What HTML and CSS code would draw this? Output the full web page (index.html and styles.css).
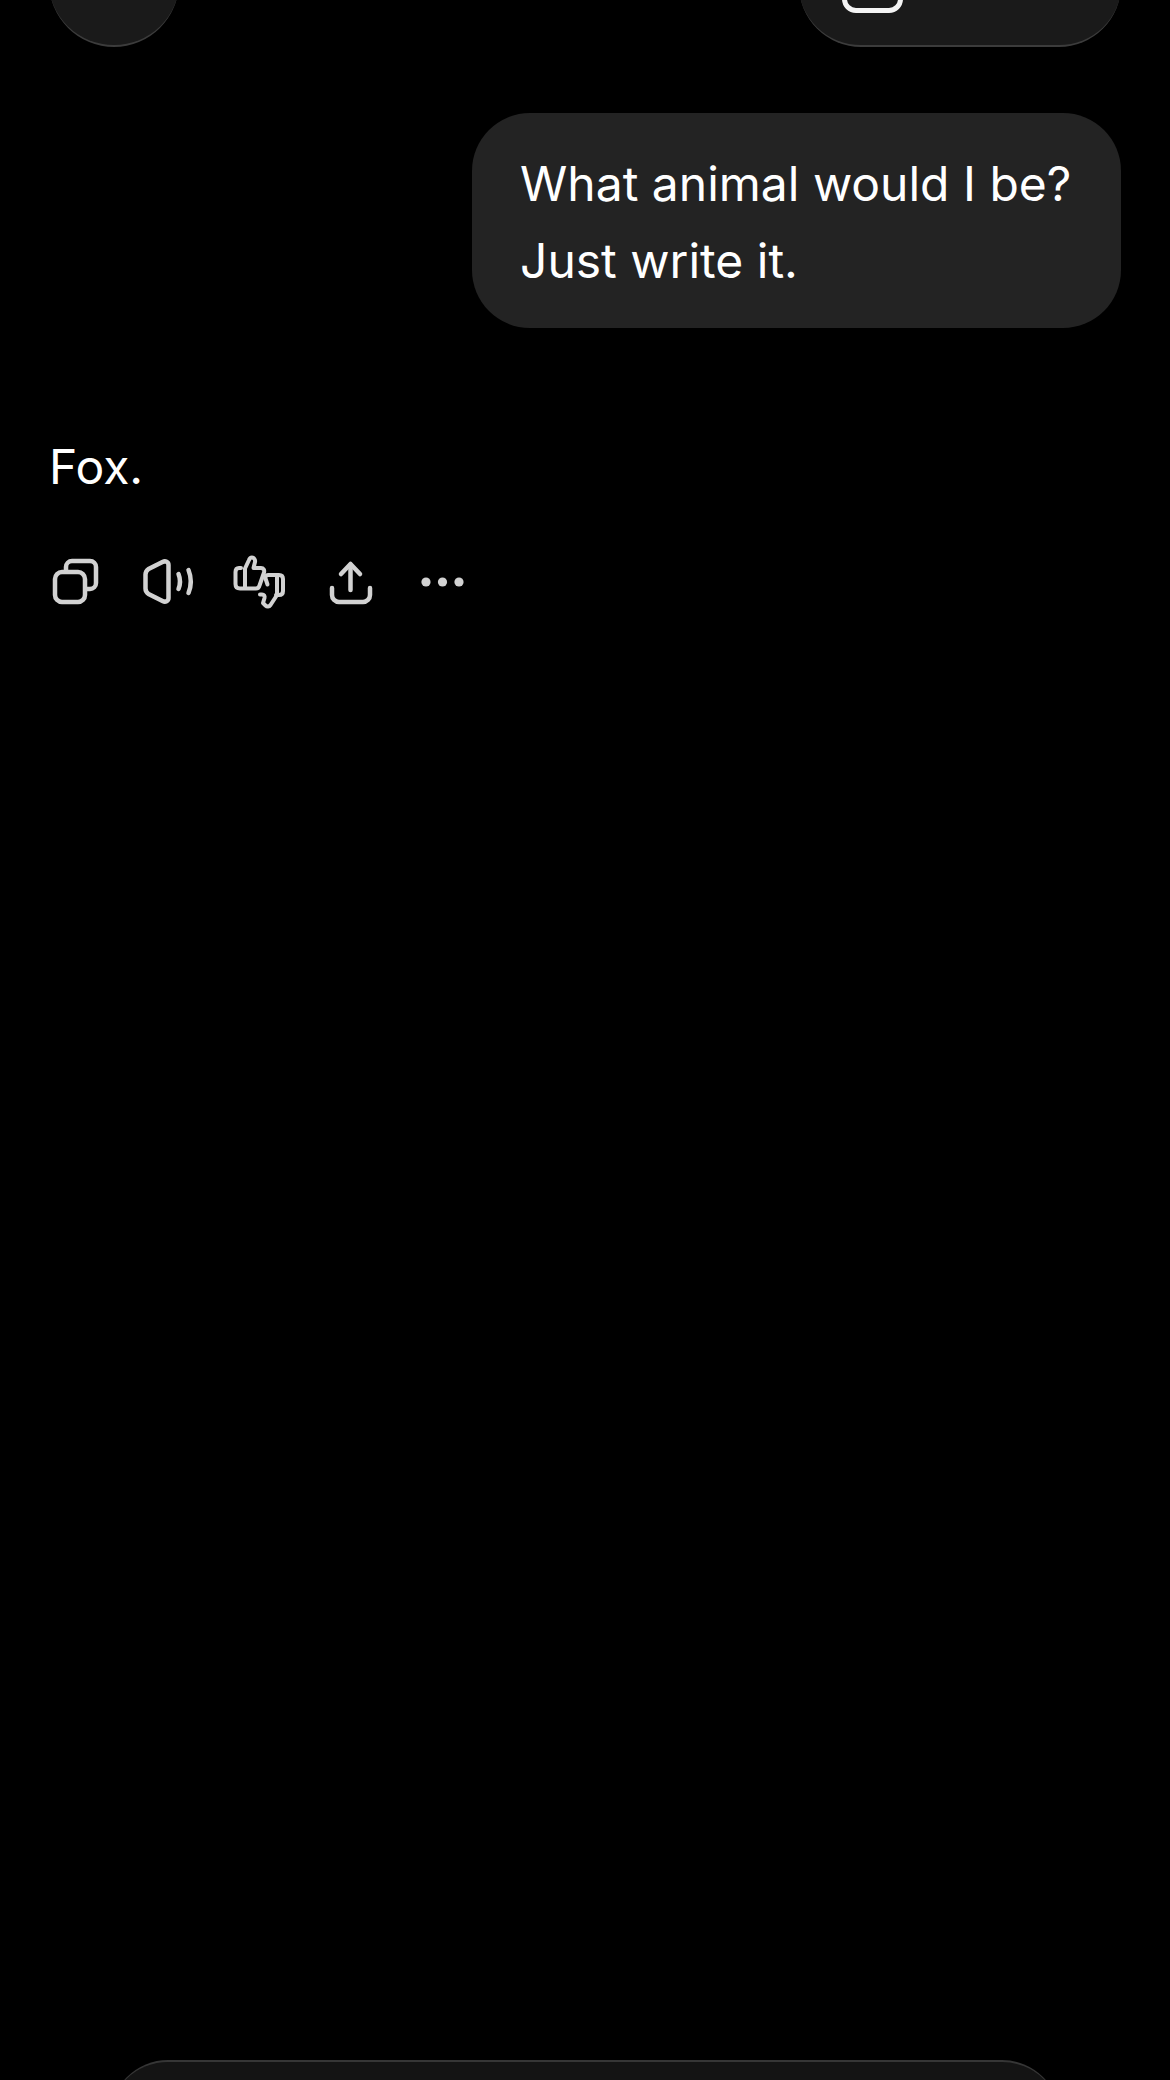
FILE: index.html
```html
<!DOCTYPE html>
<html lang="en">
<head>
<meta charset="utf-8">
<title>Chat</title>
<link rel="stylesheet" href="styles.css">
</head>
<body>
<div class="screen">
  <header class="topbar">
    <div class="round-btn"></div>
    <div class="pill-btn"><span class="pill-icon"></span></div>
  </header>
  <main class="chat">
    <div class="user-msg">What animal would I be?<br>Just write it.</div>
    <p class="reply">Fox.</p>
    <div class="actions">
      <svg class="icon" viewBox="46 552 60 60"><path d="M66 571v-4a6 6 0 0 1 6-6h18a6 6 0 0 1 6 6v16a6 6 0 0 1-6 6h-4"/><rect x="55" y="572" width="30" height="30" rx="7"/></svg>
      <svg class="icon" viewBox="137 552 60 60"><path d="M144.500 574.500c0-2.500 1-4 3-5.500l14-7c3-1.500 6 0 6 3v33c0 3-3 4.500-6 3l-14-7c-2-1.500-3-3-3-5.500z"/><path d="M177.500 574c2 5 2 10 0 15"/><path d="M187.500 570c3 7.500 3 15.500 0 23"/></svg>
      <svg class="icon icon-thumbs" viewBox="228 552 60 60"><path d="M240 568h-2c-2.500 0-3.500 1.500-3.500 4v12c0 3 1.500 4.500 4.500 4.500h16c2 0 3-1 3.500-3l4.500-13c.7-2.500-.5-4.500-3-4.500h-7.500l1.500-6c.5-2-1-4.500-3-4.500-1.500 0-2.500 1-3 2.500l-4 8.500v20"/><path d="M267 575h11c2.500 0 4 1.500 4 4v12c0 2.500-1.500 4-4 4h-3M267 575c-2 0-3 1.500-2.500 3.500l2 6"/><path d="M276 575v20l-6.500 10c-1.500 2-3.500 2-5 .5l-2.500-2.500 1.500-5c.5-2-.5-3.500-2.500-3.500h-2"/></svg>
      <svg class="icon" viewBox="320 552 60 60"><path d="M349.500 590v-25"/><path d="M340 574l9.500-10 9.500 10"/><path d="M331 588v7a7 7 0 0 0 7 7h24a7 7 0 0 0 7-7v-7"/></svg>
      <svg class="icon icon-solid" viewBox="412 552 60 60"><circle cx="426" cy="582" r="4.600"/><circle cx="442.500" cy="582" r="4.600"/><circle cx="459" cy="582" r="4.600"/></svg>
    </div>
  </main>
  <div class="composer"></div>
</div>
</body>
</html>
```
FILE: styles.css
```css
html, body {
  margin: 0;
  padding: 0;
  background: #000;
}

.screen {
  width: 1170px;
  height: 2080px;
  overflow: hidden;
  display: flex;
  flex-direction: column;
  background: #000;
  color: #fff;
  font-family: Inter, "Liberation Sans", Arial, sans-serif;
}

.topbar {
  height: 47px;
  flex: none;
  overflow: hidden;
  display: flex;
  justify-content: space-between;
  align-items: flex-end;
  padding: 0 49px;
}

.round-btn {
  width: 130px;
  height: 130px;
  flex: none;
  box-sizing: border-box;
  border-radius: 50%;
  background: #1a1a1a;
  border-bottom: 2px solid #3c3c3c;
}

.pill-btn {
  width: 322px;
  height: 130px;
  flex: none;
  box-sizing: border-box;
  padding: 36px 0 0 43px;
  border-radius: 62px;
  background: #1a1a1a;
  border-bottom: 2px solid #3c3c3c;
}

.pill-icon {
  display: block;
  width: 61px;
  height: 60px;
  box-sizing: border-box;
  border: 5px solid #f4f4f4;
  border-radius: 14px;
}

.chat {
  flex: 1;
  display: flex;
  flex-direction: column;
  padding: 66px 49px 0;
}

.user-msg {
  align-self: flex-end;
  box-sizing: border-box;
  width: 649px;
  height: 215px;
  padding: 32px 40px 0 48px;
  border-radius: 58px;
  background: #232323;
  font-size: 48px;
  line-height: 77px;
  white-space: nowrap;
}

.reply {
  margin: 100px 0 0;
  font-size: 48px;
  line-height: 77px;
}

.actions {
  display: grid;
  grid-template-columns: repeat(5, 60px);
  column-gap: 31.5px;
  margin: 47px 0 0 -3px;
}

.icon {
  display: block;
  width: 60px;
  height: 60px;
  fill: none;
  stroke: #d2d2d2;
  stroke-width: 4.5px;
  stroke-linecap: round;
  stroke-linejoin: round;
}

.icon-thumbs {
  stroke-width: 4px;
}

.icon-solid {
  fill: #d2d2d2;
  stroke: none;
}

.composer {
  flex: none;
  box-sizing: border-box;
  width: 950px;
  height: 60px;
  margin: 0 auto -40px;
  border-radius: 58px 58px 0 0;
  background: #141414;
  border-top: 2px solid #363636;
}
```
